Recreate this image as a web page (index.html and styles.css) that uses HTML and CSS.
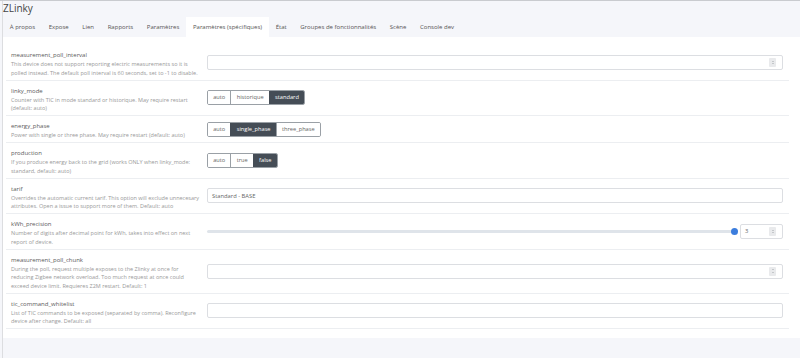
FILE: index.html
```html
<!DOCTYPE html>
<html lang="fr">
<head>
<meta charset="utf-8">
<title>ZLinky</title>
<link rel="stylesheet" href="styles.css">
</head>
<body>
<div class="page">
  <header class="head">
    <h1 class="device">ZLinky</h1>
    <nav class="tabs">
      <a class="tab">À propos</a>
      <a class="tab">Expose</a>
      <a class="tab">Lien</a>
      <a class="tab">Rapports</a>
      <a class="tab">Paramètres</a>
      <a class="tab active">Paramètres (spécifiques)</a>
      <a class="tab">État</a>
      <a class="tab">Groupes de fonctionnalités</a>
      <a class="tab">Scène</a>
      <a class="tab">Console dev</a>
    </nav>
  </header>
  <main class="card">
    <div class="row">
      <div class="label">
        <div class="title">measurement_poll_interval</div>
        <div class="desc">This device does not support reporting electric measurements so it is polled instead. The default poll interval is 60 seconds, set to -1 to disable.</div>
      </div>
      <div class="control">
        <div class="input"><span class="value"></span><span class="spin"><i class="up"></i><i class="down"></i></span></div>
      </div>
    </div>
    <div class="row">
      <div class="label">
        <div class="title">linky_mode</div>
        <div class="desc">Counter with TIC in mode standard or historique. May require restart (default: auto)</div>
      </div>
      <div class="control">
        <div class="btn-group"><span class="btn">auto</span><span class="btn">historique</span><span class="btn on">standard</span></div>
      </div>
    </div>
    <div class="row">
      <div class="label">
        <div class="title">energy_phase</div>
        <div class="desc">Power with single or three phase. May require restart (default: auto)</div>
      </div>
      <div class="control">
        <div class="btn-group"><span class="btn">auto</span><span class="btn on">single_phase</span><span class="btn">three_phase</span></div>
      </div>
    </div>
    <div class="row">
      <div class="label">
        <div class="title">production</div>
        <div class="desc">If you produce energy back to the grid (works ONLY when linky_mode: standard, default: auto)</div>
      </div>
      <div class="control">
        <div class="btn-group"><span class="btn">auto</span><span class="btn">true</span><span class="btn on">false</span></div>
      </div>
    </div>
    <div class="row">
      <div class="label">
        <div class="title">tarif</div>
        <div class="desc">Overrides the automatic current tarif. This option will exclude unnecesary attributes. Open a issue to support more of them. Default: auto</div>
      </div>
      <div class="control">
        <div class="input"><span class="value">Standard - BASE</span></div>
      </div>
    </div>
    <div class="row">
      <div class="label">
        <div class="title">kWh_precision</div>
        <div class="desc">Number of digits after decimal point for kWh, takes into effect on next report of device.</div>
      </div>
      <div class="control slider">
        <div class="range"><span class="track"></span><span class="thumb"></span></div>
        <div class="input num"><span class="value">3</span><span class="spin"><i class="up"></i><i class="down"></i></span></div>
      </div>
    </div>
    <div class="row">
      <div class="label">
        <div class="title">measurement_poll_chunk</div>
        <div class="desc">During the poll, request multiple exposes to the Zlinky at once for reducing Zigbee network overload. Too much request at once could exceed device limit. Requieres Z2M restart. Default: 1</div>
      </div>
      <div class="control">
        <div class="input"><span class="value"></span><span class="spin"><i class="up"></i><i class="down"></i></span></div>
      </div>
    </div>
    <div class="row">
      <div class="label">
        <div class="title">tic_command_whitelist</div>
        <div class="desc">List of TIC commands to be exposed (separated by comma). Reconfigure device after change. Default: all</div>
      </div>
      <div class="control">
        <div class="input"><span class="value"></span></div>
      </div>
    </div>
  </main>
</div>
</body>
</html>
```
FILE: styles.css
```css
* { box-sizing: border-box; }
html, body { margin: 0; padding: 0; }
body {
  background: #f5f6fa;
  border-top: 1px solid #c9cbcf;
  font-family: "Open Sans", "Noto Sans", sans-serif;
  color: #333;
  height: 358px;
  overflow: hidden;
}
.page {
  margin-left: 2px;
  border-left: 1px solid #dcdde0;
  min-height: 357px;
}
.device {
  margin: 0;
  font-size: 10px;
  line-height: 14px;
  font-weight: 400;
  color: #444;
}
.tabs {
  display: flex;
  margin-top: 2px;
  height: 20px;
}
.tab {
  padding: 0 6.8px;
  font-size: 6.02px;
  line-height: 20px;
  color: #555;
}
.tab.active { background: #fff; }
.card {
  background: #fff;
  padding: 8px 11px 9px 3px;
}
.row {
  display: flex;
  align-items: center;
  gap: 6px;
  padding: 0 6px 0 5px;
  border-bottom: 1px solid #eceef1;
}
.label {
  width: 190px;
  flex: none;
  padding: 5px 0 2.5px;
}
.title {
  font-size: 6px;
  line-height: 10px;
  color: #5a5a5a;
}
.desc {
  font-size: 5.5px;
  line-height: 8.5px;
  color: #999;
}
.control {
  flex: 1;
  display: flex;
  align-items: center;
}
.input {
  flex: 1;
  height: 15px;
  border: 1px solid #dcdee2;
  border-radius: 2px;
  display: flex;
  align-items: center;
  padding: 0 4px 0 4px;
  font-size: 5.8px;
  color: #666;
}
.value { flex: 1; }
.spin {
  width: 7px;
  height: 9px;
  background: #e9eaec;
  border-radius: 1px;
  display: flex;
  flex-direction: column;
  align-items: center;
  justify-content: center;
  gap: 1.5px;
  margin-right: 2px;
}
.spin i {
  width: 0;
  height: 0;
  border-left: 1.5px solid transparent;
  border-right: 1.5px solid transparent;
}
.spin .up { border-bottom: 1.5px solid #a0a3a8; }
.spin .down { border-top: 1.5px solid #a0a3a8; }
.btn-group {
  display: inline-flex;
  border: 1px solid #9aa0a6;
  border-radius: 2px;
  height: 15px;
  overflow: hidden;
}
.btn {
  padding: 0 5.2px;
  font-size: 5.7px;
  line-height: 13px;
  color: #666;
  border-left: 1px solid #9aa0a6;
  background: #fff;
}
.btn:first-child { border-left: 0; }
.btn.on {
  background: #454d56;
  color: #fff;
  border-left-color: #454d56;
}
.slider { gap: 2px; }
.range {
  flex: 1;
  display: flex;
  align-items: center;
}
.track {
  flex: 1;
  height: 3px;
  border-radius: 2px;
  background: #dfe4ea;
}
.thumb {
  width: 7px;
  height: 7px;
  border-radius: 50%;
  background: #3b7ddd;
  margin-left: -3.5px;
}
.input.num {
  flex: none;
  width: 43px;
}
```
